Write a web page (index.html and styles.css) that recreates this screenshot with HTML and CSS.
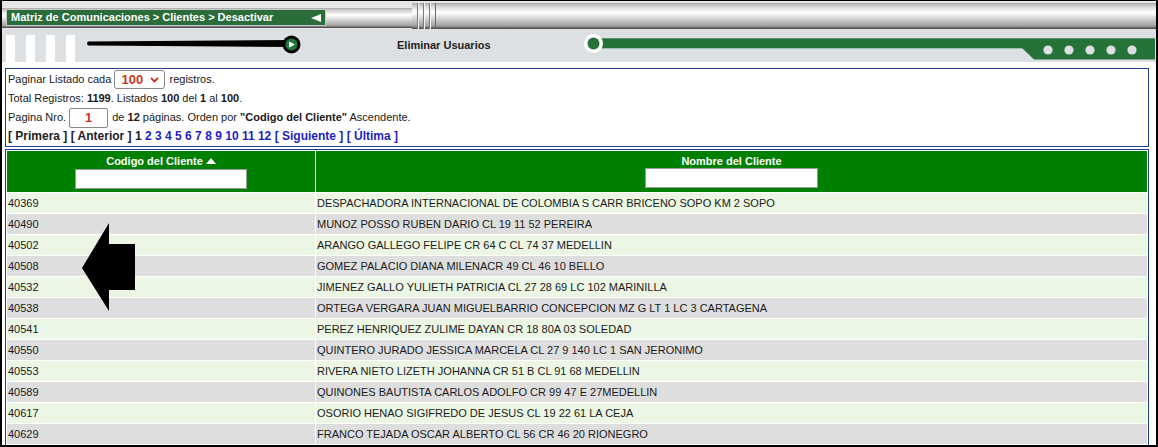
FILE: index.html
```html
<!DOCTYPE html>
<html lang="es">
<head>
<meta charset="utf-8">
<title>Desactivar Clientes</title>
<link rel="stylesheet" href="styles.css">
</head>
<body>
<div class="frame">
  <div class="topbar">
    <div class="seg seg-left">
      <div class="crumb">
        <span class="crumb-text">Matriz de Comunicaciones &gt; Clientes &gt; Desactivar</span>
        <svg class="crumb-tri" width="11" height="8" viewBox="0 0 11 8"><polygon points="0,4 10,0 10,8" fill="#fff"/></svg>
      </div>
    </div>
    <div class="seg grooves"></div>
    <div class="seg seg-right"></div>
  </div>

  <div class="toolbar">
    <div class="bars"><i></i><i></i><i></i><i></i></div>
    <svg class="slider" width="220" height="33" viewBox="0 0 220 33">
      <polygon points="4,12.5 206,11 206,18 4,16.5" fill="#000"/>
      <circle cx="4" cy="14.5" r="2" fill="#000"/>
      <circle cx="206.5" cy="15.5" r="9" fill="#000"/>
      <circle cx="206.5" cy="15.5" r="6" fill="#23763a"/>
      <polygon points="204,12.5 210,15.5 204,18.5" fill="#fff"/>
    </svg>
    <div class="title">Eliminar Usuarios</div>
    <svg class="rail" width="575" height="33" viewBox="0 0 575 33">
      <rect x="18" y="9.3" width="557" height="10" fill="#26733a"/>
      <polygon points="442,19 454,30.5 575,30.5 575,19" fill="#26733a"/>
      <circle cx="468" cy="21" r="4.6" fill="#dde0e3"/>
      <circle cx="489" cy="21" r="4.6" fill="#dde0e3"/>
      <circle cx="510" cy="21" r="4.6" fill="#dde0e3"/>
      <circle cx="531" cy="21" r="4.6" fill="#dde0e3"/>
      <circle cx="552" cy="21" r="4.6" fill="#dde0e3"/>
      <circle cx="13.5" cy="14.5" r="9.5" fill="#fff"/>
      <circle cx="13.5" cy="14.5" r="6" fill="#26733a"/>
    </svg>
  </div>

  <div class="pager">
    <div class="line">Paginar Listado cada <span class="select"><span class="select-val">100</span><svg width="9" height="6" viewBox="0 0 9 6"><polyline points="1,1 4.5,4.5 8,1" fill="none" stroke="#c8361a" stroke-width="1.8"/></svg></span> registros.</div>
    <div class="line">Total Registros: <b>1199</b>. Listados <b>100</b> del <b>1</b> al <b>100</b>.</div>
    <div class="line">Pagina Nro. <span class="pageinput">1</span> de <b>12</b> páginas. Orden por <b>"Codigo del Cliente"</b> Ascendente.</div>
    <div class="line nav"><span class="dim">[ Primera ] [ Anterior ]</span> <span class="dim">1</span> <a>2</a> <a>3</a> <a>4</a> <a>5</a> <a>6</a> <a>7</a> <a>8</a> <a>9</a> <a>10</a> <a>11</a> <a>12</a> <a>[ Siguiente ]</a> <a>[ Última ]</a></div>
  </div>

  <table class="grid">
    <colgroup><col class="c1"><col class="c2"></colgroup>
    <thead>
      <tr>
        <th><span class="th-label">Codigo del Cliente <svg width="10" height="6" viewBox="0 0 10 6"><polygon points="0,6 5,0 10,6" fill="#fff"/></svg></span><span class="filter f1"></span></th>
        <th><span class="th-label">Nombre del Cliente</span><span class="filter f2"></span></th>
      </tr>
    </thead>
    <tbody>
      <tr><td>40369</td><td>DESPACHADORA INTERNACIONAL DE COLOMBIA S CARR BRICENO SOPO KM 2 SOPO</td></tr>
      <tr><td>40490</td><td>MUNOZ POSSO RUBEN DARIO CL 19 11 52 PEREIRA</td></tr>
      <tr><td>40502</td><td>ARANGO GALLEGO FELIPE CR 64 C CL 74 37 MEDELLIN</td></tr>
      <tr><td>40508</td><td>GOMEZ PALACIO DIANA MILENACR 49 CL 46 10 BELLO</td></tr>
      <tr><td>40532</td><td>JIMENEZ GALLO YULIETH PATRICIA CL 27 28 69 LC 102 MARINILLA</td></tr>
      <tr><td>40538</td><td>ORTEGA VERGARA JUAN MIGUELBARRIO CONCEPCION MZ G LT 1 LC 3 CARTAGENA</td></tr>
      <tr><td>40541</td><td>PEREZ HENRIQUEZ ZULIME DAYAN CR 18 80A 03 SOLEDAD</td></tr>
      <tr><td>40550</td><td>QUINTERO JURADO JESSICA MARCELA CL 27 9 140 LC 1 SAN JERONIMO</td></tr>
      <tr><td>40553</td><td>RIVERA NIETO LIZETH JOHANNA CR 51 B CL 91 68 MEDELLIN</td></tr>
      <tr><td>40589</td><td>QUINONES BAUTISTA CARLOS ADOLFO CR 99 47 E 27MEDELLIN</td></tr>
      <tr><td>40617</td><td>OSORIO HENAO SIGIFREDO DE JESUS CL 19 22 61 LA CEJA</td></tr>
      <tr><td>40629</td><td>FRANCO TEJADA OSCAR ALBERTO CL 56 CR 46 20 RIONEGRO</td></tr>
    </tbody>
  </table>

  <svg class="arrow" width="57" height="92" viewBox="0 0 57 92"><polygon points="2,47 29,2 29,23 55,23 55,69 29,69 29,90" fill="#000"/></svg>
</div>
</body>
</html>
```

FILE: styles.css
```css
html, body {
  margin: 0;
  padding: 0;
  background: #fff;
}

.frame {
  position: relative;
  width: 1158px;
  height: 447px;
  box-sizing: border-box;
  border: 2px solid #000;
  border-top-width: 1px;
  overflow: hidden;
  background: #fff;
  font-family: "Liberation Sans", Arial, sans-serif;
  font-size: 11px;
  color: #1a1a1a;
}

/* ---------- top metallic bar ---------- */
.topbar {
  height: 28px;
  display: flex;
  align-items: flex-start;
  background: #e4e6e8;
}

.seg {
  background: linear-gradient(to bottom,
    #a9a9a9 0%, #d2d2d2 12%, #f6f6f6 30%, #ffffff 38%,
    #dcdcdc 55%, #bdbdbd 72%, #a2a2a2 88%, #5e5e5e 96%, #4a4a4a 100%);
}

.seg-left {
  width: 410px;
  height: 20px;
  margin-top: 7px;
}

.seg-right {
  flex: 1;
  height: 26px;
  margin-top: 2px;
}

.grooves {
  width: 36px;
  height: 26px;
  margin-top: 2px;
  background:
    linear-gradient(to right,
      transparent 0px, transparent 5px,
      #7a7a7a 5px, #7a7a7a 6px, #f4f4f4 6px, #f4f4f4 7px, transparent 7px, transparent 11px,
      #7a7a7a 11px, #7a7a7a 12px, #f4f4f4 12px, #f4f4f4 13px, transparent 13px, transparent 17px,
      #7a7a7a 17px, #7a7a7a 18px, #f4f4f4 18px, #f4f4f4 19px, transparent 19px, transparent 23px,
      #6a6a6a 23px, #6a6a6a 24px, transparent 24px),
    linear-gradient(to bottom,
      #a9a9a9 0%, #d2d2d2 12%, #f6f6f6 30%, #ffffff 38%,
      #dcdcdc 55%, #bdbdbd 72%, #a2a2a2 88%, #5e5e5e 96%, #4a4a4a 100%);
}

.crumb {
  margin: 1px 0 0 4px;
  width: 320px;
  height: 17px;
  box-sizing: border-box;
  border: 1px solid #c9c9c9;
  background: #2a6c3a;
  display: flex;
  align-items: center;
  justify-content: space-between;
  padding: 0 3px 0 4px;
}

.crumb-text {
  color: #fff;
  font-weight: bold;
  font-size: 11px;
  line-height: 15px;
}

.crumb-tri {
  display: block;
}

/* ---------- toolbar ---------- */
.toolbar {
  height: 33px;
  display: flex;
  background: #dde0e3;
}

.bars {
  display: flex;
  gap: 11px;
  margin-left: 4px;
  align-self: flex-end;
}

.bars i {
  display: block;
  width: 9px;
  height: 27px;
  background: #fff;
}

.slider {
  display: block;
  margin-left: 10px;
}

.title {
  width: 275px;
  box-sizing: border-box;
  padding-left: 92px;
  line-height: 33px;
  font-weight: bold;
  font-size: 11px;
  color: #222;
}

.rail {
  display: block;
}

/* ---------- pager box ---------- */
.pager {
  margin: 6px 0 0 3px;
  width: 1144px;
  height: 79px;
  box-sizing: border-box;
  border: 1px solid #213f8f;
  padding: 1px 0 0 2px;
}

.line {
  height: 19px;
  line-height: 19px;
  white-space: nowrap;
}

.select {
  display: inline-flex;
  align-items: center;
  justify-content: space-between;
  vertical-align: top;
  box-sizing: border-box;
  width: 51px;
  height: 19px;
  margin: 0 1px 0 0;
  padding: 0 5px 0 6px;
  border: 1px solid #8a8a8a;
  border-radius: 3px;
  background: #fff;
}

.select-val {
  color: #c8361a;
  font-size: 13px;
  font-weight: bold;
  line-height: 17px;
}

.pageinput {
  display: inline-block;
  vertical-align: top;
  box-sizing: border-box;
  width: 39px;
  height: 20px;
  margin: 0 1px 0 0;
  border: 1px solid #8a8a8a;
  border-radius: 2px;
  text-align: center;
  line-height: 18px;
  color: #c8361a;
  font-size: 13px;
  font-weight: bold;
}

.nav {
  font-size: 12px;
  font-weight: bold;
}

.nav .dim {
  color: #222;
}

.nav a {
  color: #1f1fc4;
}

/* ---------- grid ---------- */
.grid {
  margin: 2px 0 0 3px;
  width: 1144px;
  border: 1px solid #213f8f;
  border-spacing: 1px;
  table-layout: fixed;
}

.grid col.c1 {
  width: 308px;
}

.grid th {
  background: #008000;
  color: #fff;
  font-weight: bold;
  font-size: 11px;
  height: 41px;
  box-sizing: border-box;
  padding: 4px 0 0 0;
  vertical-align: top;
  text-align: center;
}

.th-label {
  display: block;
  line-height: 13px;
}

.th-label svg {
  vertical-align: 1px;
}

.filter {
  display: block;
  height: 20px;
  margin: 1px auto 0;
  box-sizing: border-box;
  border: 1px solid #9a9a9a;
  background: #fff;
}

.filter.f1 {
  width: 172px;
}

.filter.f2 {
  width: 173px;
  margin-top: 0;
}

.grid td {
  height: 20px;
  box-sizing: border-box;
  padding: 0 1px;
  line-height: 20px;
  font-size: 11px;
  white-space: nowrap;
  overflow: hidden;
}

.grid tbody tr:nth-child(odd) td {
  background: #ecf6e4;
}

.grid tbody tr:nth-child(even) td {
  background: #dedede;
}

/* ---------- overlay arrow ---------- */
.arrow {
  position: absolute;
  left: 78px;
  top: 220px;
  display: block;
}
```
